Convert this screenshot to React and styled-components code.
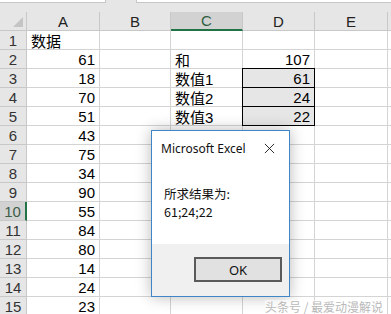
import React from "react";
import styled, { createGlobalStyle } from "styled-components";

const COLS = [
  { key: "A", width: 73 },
  { key: "B", width: 71 },
  { key: "C", width: 72, active: true },
  { key: "D", width: 72 },
  { key: "E", width: 73 },
  { key: "", width: 40 },
];

const colA = [null, 61, 18, 70, 51, 43, 75, 34, 90, 55, 84, 80, 14, 24, 23];

const sideTable = {
  2: { label: "和", value: 107 },
  3: { label: "数值1", value: 61, boxed: true },
  4: { label: "数值2", value: 24, boxed: true },
  5: { label: "数值3", value: 22, boxed: true },
};

const GlobalStyle = createGlobalStyle`
  html, body {
    margin: 0;
    padding: 0;
    background: #ffffff;
    overflow: hidden;
  }
  body {
    font-family: "Liberation Sans", "Noto Sans CJK SC", sans-serif;
  }
`;

const App = () => {
  const rows = Array.from({ length: 15 }, (_, i) => i + 1);

  return (
    <>
      <GlobalStyle />
      <Sheet>
        <FormulaStrip>
          <NameBox />
          <FormulaBox />
        </FormulaStrip>

        <HeaderRow>
          <Corner>
            <CornerTriangle />
          </Corner>
          {COLS.map((c, i) => (
            <ColHeader key={i} $width={c.width} $active={c.active}>
              {c.key}
            </ColHeader>
          ))}
        </HeaderRow>

        {rows.map((r) => {
          const side = sideTable[r];
          return (
            <Row key={r}>
              <RowHeader $active={r === 10}>{r}</RowHeader>
              <Cell $width={73} $align={r === 1 ? "left" : "right"}>
                {r === 1 ? "数据" : colA[r - 1]}
              </Cell>
              <Cell $width={71} />
              <Cell $width={72} $align="left">
                {side ? side.label : ""}
              </Cell>
              <Cell
                $width={72}
                $align="right"
                $boxed={side && side.boxed}
                $first={r === 3}
              >
                {side ? side.value : ""}
              </Cell>
              <Cell $width={73} />
              <Cell $width={40} />
            </Row>
          );
        })}

        <Dialog>
          <TitleBar>
            <Title>Microsoft Excel</Title>
            <CloseIcon viewBox="0 0 12 12">
              <path d="M1 1 L11 11 M11 1 L1 11" stroke="#1a1a1a" strokeWidth="1" />
            </CloseIcon>
          </TitleBar>
          <DialogBody>
            <Message>所求结果为:</Message>
            <Message>61;24;22</Message>
          </DialogBody>
          <DialogFooter>
            <OkButton>OK</OkButton>
          </DialogFooter>
        </Dialog>

        <Watermark>头条号 / 最爱动漫解说</Watermark>
      </Sheet>
    </>
  );
};

const Sheet = styled.div`
  position: relative;
  width: 391px;
  height: 314px;
  overflow: hidden;
  background: #ffffff;
`;

const FormulaStrip = styled.div`
  display: flex;
  height: 12px;
  background: #e6e6e6;
  box-sizing: border-box;
`;

const NameBox = styled.div`
  width: 105px;
  height: 2px;
  background: #ffffff;
  border-bottom: 1px solid #c6c6c6;
  border-right: 1px solid #c6c6c6;
`;

const FormulaBox = styled.div`
  margin-left: 30px;
  flex: 1;
  height: 2px;
  background: #ffffff;
  border-bottom: 1px solid #c6c6c6;
  border-left: 1px solid #c6c6c6;
`;

const HeaderRow = styled.div`
  display: flex;
  height: 19px;
  background: #e6e6e6;
`;

const Corner = styled.div`
  position: relative;
  width: 27px;
  height: 19px;
  box-sizing: border-box;
  border-right: 1px solid #c8c8c8;
  border-bottom: 1px solid #c8c8c8;
  flex-shrink: 0;
`;

const CornerTriangle = styled.div`
  position: absolute;
  right: 3px;
  bottom: 3px;
  width: 0;
  height: 0;
  border-left: 10px solid transparent;
  border-bottom: 10px solid #c4c4c4;
`;

const ColHeader = styled.div`
  width: ${(p) => p.$width}px;
  height: 19px;
  flex-shrink: 0;
  box-sizing: border-box;
  display: flex;
  align-items: center;
  justify-content: center;
  font-size: 15px;
  color: ${(p) => (p.$active ? "#2f5f3f" : "#222222")};
  background: ${(p) => (p.$active ? "#d2d2d2" : "#e6e6e6")};
  border-right: 1px solid #c8c8c8;
  border-bottom: ${(p) => (p.$active ? "2px solid #217346" : "1px solid #c8c8c8")};
`;

const Row = styled.div`
  display: flex;
  height: 19px;
`;

const RowHeader = styled.div`
  width: 27px;
  height: 19px;
  flex-shrink: 0;
  box-sizing: border-box;
  display: flex;
  align-items: center;
  justify-content: center;
  font-size: 15px;
  color: ${(p) => (p.$active ? "#3d5d49" : "#333333")};
  background: ${(p) => (p.$active ? "#d2d2d2" : "#e6e6e6")};
  border-bottom: 1px solid #c8c8c8;
  border-right: ${(p) => (p.$active ? "2px solid #217346" : "1px solid #c8c8c8")};
`;

const Cell = styled.div`
  width: ${(p) => p.$width}px;
  height: 19px;
  flex-shrink: 0;
  box-sizing: border-box;
  display: flex;
  align-items: center;
  justify-content: ${(p) => (p.$align === "right" ? "flex-end" : "flex-start")};
  padding: 0 4px;
  font-size: 15px;
  color: #000000;
  white-space: nowrap;
  background: ${(p) => (p.$boxed ? "#e7e6e6" : "#ffffff")};
  border-right: 1px solid ${(p) => (p.$boxed ? "#000000" : "#d4d4d4")};
  border-bottom: 1px solid ${(p) => (p.$boxed ? "#000000" : "#d4d4d4")};
  ${(p) => p.$boxed && "border-left: 1px solid #000000; margin-left: -1px; width: " + (p.$width + 1) + "px;"}
  ${(p) => p.$first && "border-top: 1px solid #000000; margin-top: -1px; height: 20px;"}
`;

const Dialog = styled.div`
  position: absolute;
  left: 151px;
  top: 130px;
  width: 139px;
  height: 167px;
  box-sizing: border-box;
  display: flex;
  flex-direction: column;
  background: #ffffff;
  border: 1px solid #3f86c6;
  box-shadow: 0 0 14px rgba(0, 0, 0, 0.28);
  font-family: "Noto Sans", "Noto Sans CJK SC", sans-serif;
`;

const TitleBar = styled.div`
  display: flex;
  align-items: center;
  justify-content: space-between;
  height: 34px;
  padding: 0 14px 2px 9px;
`;

const Title = styled.span`
  font-size: 12px;
  color: #111111;
`;

const CloseIcon = styled.svg`
  width: 11px;
  height: 11px;
`;

const DialogBody = styled.div`
  flex: 1;
  display: flex;
  flex-direction: column;
  padding: 18px 12px 0;
`;

const Message = styled.div`
  font-size: 12.5px;
  line-height: 18px;
  color: #111111;
  font-family: "Noto Sans CJK SC", sans-serif;
`;

const DialogFooter = styled.div`
  height: 52px;
  display: flex;
  justify-content: flex-end;
  align-items: flex-start;
  padding: 13px 7px 0 0;
  box-sizing: border-box;
  background: #f0f0f0;
`;

const OkButton = styled.div`
  width: 88px;
  height: 25px;
  box-sizing: border-box;
  display: flex;
  align-items: center;
  justify-content: center;
  font-size: 13px;
  color: #111111;
  background: #e1e1e1;
  border: 2px solid #5a5a5a;
`;

const Watermark = styled.div`
  position: absolute;
  left: 265px;
  top: 300px;
  font-size: 12px;
  color: #b9b9b9;
  font-family: "Noto Sans CJK SC", sans-serif;
  white-space: nowrap;
  line-height: 14px;
  background: rgba(255, 255, 255, 0.5);
`;

export default App;
